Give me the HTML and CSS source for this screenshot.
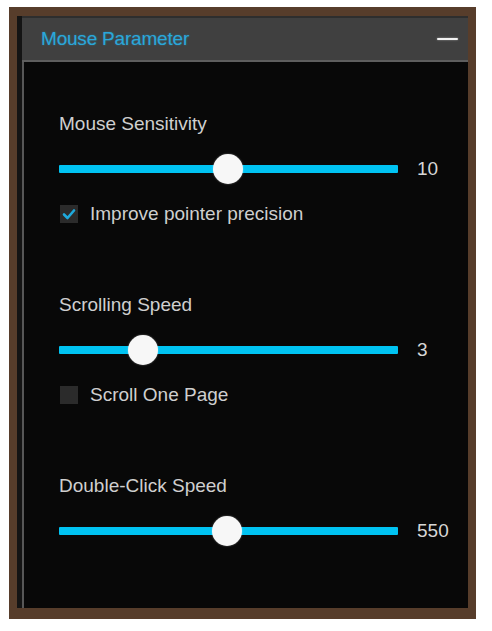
FILE: index.html
```html
<!DOCTYPE html>
<html>
<head>
<meta charset="utf-8">
<link rel="stylesheet" href="styles.css">
</head>
<body>
<div class="frame">
  <div class="panel">
    <div class="panel-edge"></div>
    <div class="panel-main">
      <div class="header">
        <span class="title">Mouse Parameter</span>
        <span class="minimize"></span>
      </div>
      <div class="body">
        <div class="section">
          <div class="label">Mouse Sensitivity</div>
          <div class="slider-row">
            <div class="track"><div class="thumb" style="left:49.9%"></div></div>
            <span class="value">10</span>
          </div>
          <div class="check-row">
            <span class="box">
              <svg viewBox="0 0 18 18" width="18" height="18"><path d="M4 9.5 L7.5 13 L14 5.5" fill="none" stroke="#1ea9dc" stroke-width="2.6" stroke-linecap="round" stroke-linejoin="round"/></svg>
            </span>
            <span class="check-text">Improve pointer precision</span>
          </div>
        </div>
        <div class="section">
          <div class="label">Scrolling Speed</div>
          <div class="slider-row">
            <div class="track"><div class="thumb" style="left:24.8%"></div></div>
            <span class="value">3</span>
          </div>
          <div class="check-row">
            <span class="box"></span>
            <span class="check-text">Scroll One Page</span>
          </div>
        </div>
        <div class="section">
          <div class="label">Double-Click Speed</div>
          <div class="slider-row">
            <div class="track"><div class="thumb" style="left:49.7%"></div></div>
            <span class="value">550</span>
          </div>
        </div>
      </div>
    </div>
  </div>
</div>
</body>
</html>
```

FILE: styles.css
```css
html, body {
  margin: 0;
  padding: 0;
  background: #ffffff;
}
body {
  font-family: "Liberation Sans", Arial, sans-serif;
  font-size: 19px;
}
.frame {
  margin: 7px 0 0 9px;
  width: 467px;
  height: 612px;
  box-sizing: border-box;
  padding: 9px 8px 11px 8px;
  background: #573d2b;
}
.panel {
  display: flex;
  height: 100%;
  background: #080808;
}
.panel-edge {
  width: 5px;
  background: #141414;
}
.panel-main {
  flex: 1;
  display: flex;
  flex-direction: column;
}
.header {
  height: 44px;
  box-sizing: border-box;
  border-top: 2px solid #2e2e2e;
  border-bottom: 2px solid #5e5e5e;
  background: #404040;
  display: flex;
  align-items: center;
  justify-content: space-between;
  padding: 0 10px 0 19px;
  height: 46px;
}
.title {
  color: #2aa7da;
  text-shadow: 0 0 2px rgba(40, 170, 220, 0.45);
  letter-spacing: -0.2px;
}
.minimize {
  width: 21px;
  height: 2px;
  border-radius: 1px;
  background: #f2f2f2;
  box-shadow: 0 0 2px rgba(255,255,255,0.5);
}
.body {
  flex: 1;
  border-left: 2px solid #575757;
  padding: 50px 0 0 35px;
  display: flex;
  flex-direction: column;
  gap: 69px;
}
.section {
  display: flex;
  flex-direction: column;
  gap: 18px;
}
.label {
  color: #cfcfcf;
  line-height: 24px;
  height: 24px;
}
.slider-row {
  display: flex;
  align-items: center;
  height: 30px;
  gap: 19px;
}
.track {
  position: relative;
  width: 339px;
  height: 8px;
  background: #00c3f2;
  border-radius: 1px;
}
.thumb {
  position: absolute;
  top: 50%;
  width: 30px;
  height: 30px;
  margin: -15px 0 0 -15px;
  border-radius: 50%;
  background: #f7f7f7;
  box-shadow: 0 0 2px rgba(255,255,255,0.4);
}
.value {
  color: #d6d6d6;
  line-height: 24px;
}
.check-row {
  display: flex;
  align-items: center;
  gap: 12px;
  height: 20px;
  margin-top: 2px;
  padding-left: 1px;
}
.box {
  width: 18px;
  height: 18px;
  background: #2b2b2b;
  display: flex;
}
.check-text {
  color: #cfcfcf;
  line-height: 24px;
}
```
